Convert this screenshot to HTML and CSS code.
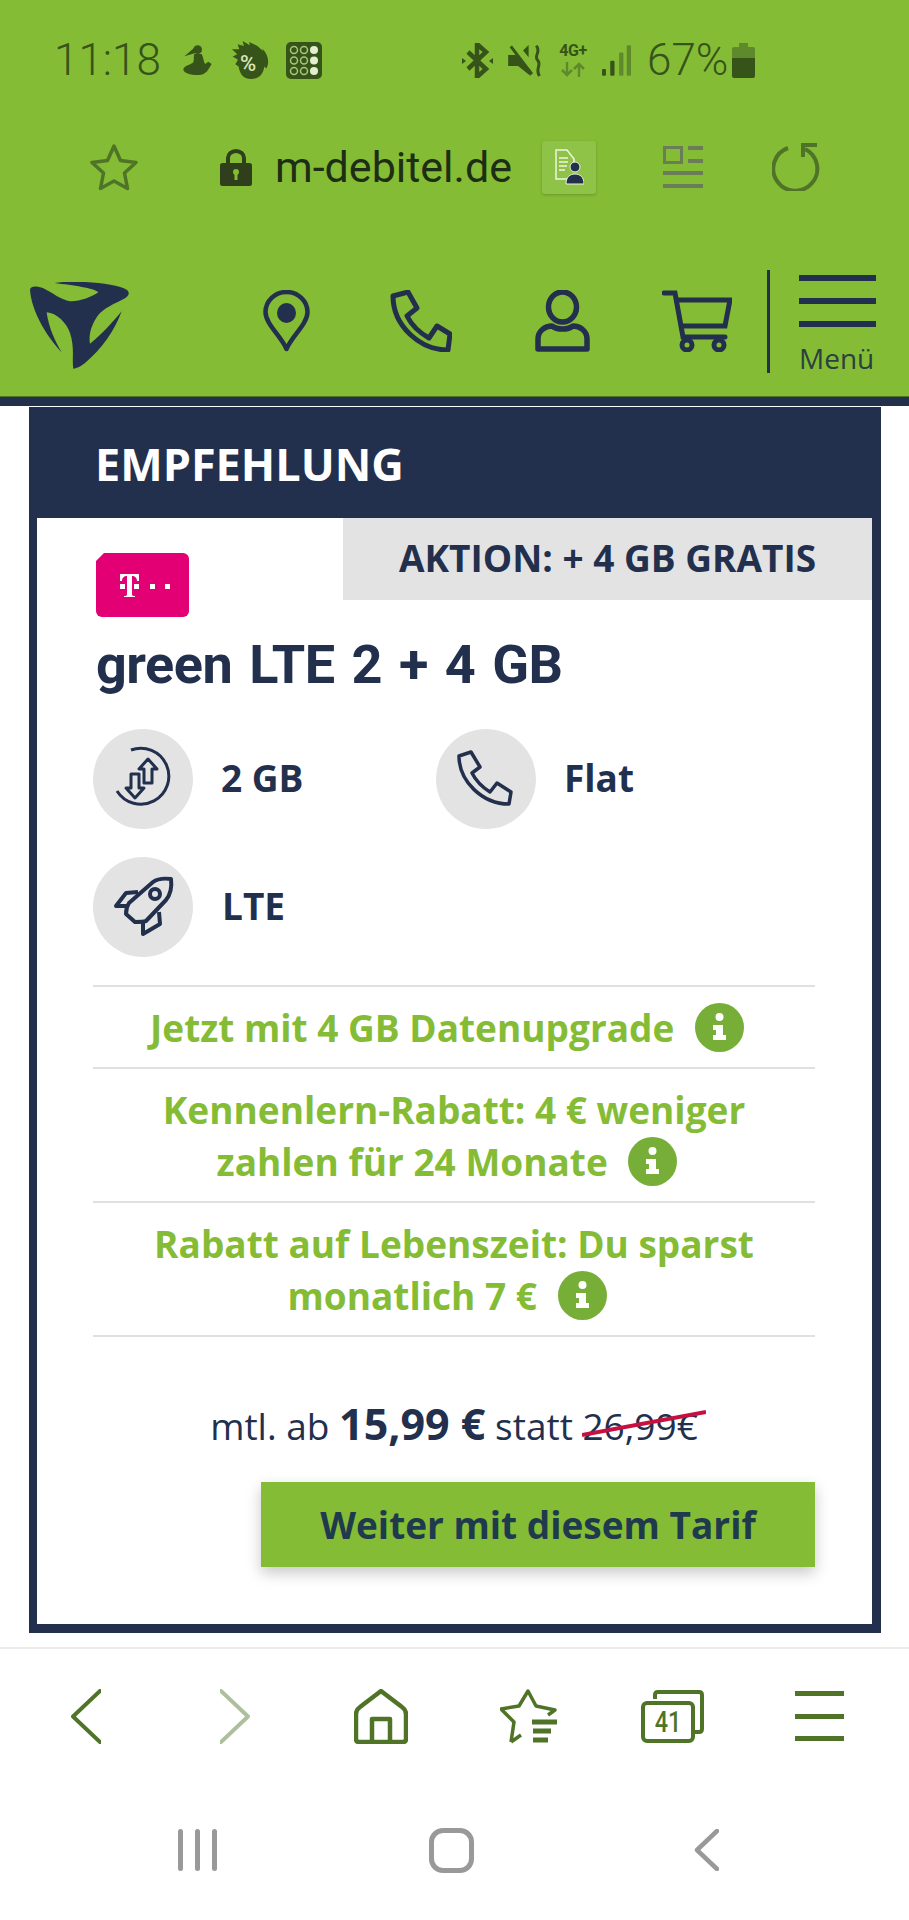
FILE: index.html
```html
<!DOCTYPE html>
<html lang="de">
<head>
<meta charset="utf-8">
<title>green LTE 2 + 4 GB</title>
<link rel="stylesheet" href="styles.css">
</head>
<body>
<div class="phone">
  <header class="top">
    <div class="status">
      <span class="time">11:18</span>
      <svg class="st-fig" width="29" height="30" viewBox="25 28 85 90"><circle cx="68" cy="42" r="13" fill="#36531a"/><path fill="#36531a" d="M58 36L28 62 62 52zM58 55H80C85 65 85 75 90 85L100 78 110 85C100 100 95 118 70 118 45 118 25 112 25 100 30 90 45 88 55 80 58 70 55 62 58 55Z"/></svg>
      <span class="st-head"><svg width="39" height="38" viewBox="168 15 112 115"><path fill="#36531a" d="M200 15L222 28 220 18 245 30 262 45 260 38C278 58 282 80 272 98L266 92C262 120 245 130 225 130 205 130 192 118 188 92L178 85 186 72 170 62 184 55 168 40 190 40 185 25 204 30Z"/></svg><span class="pct">%</span></span>
      <svg class="st-grid" width="36" height="37" viewBox="0 0 36 37"><rect width="36" height="37" rx="5" fill="#36531a"/><g fill="none" stroke="#a5c878" stroke-width="1.500"><circle cx="8" cy="8" r="3.500"/><circle cx="18" cy="8" r="3.500"/><circle cx="8" cy="18.500" r="3.500"/><circle cx="18" cy="18.500" r="3.500"/><circle cx="8" cy="29" r="3.500"/><circle cx="18" cy="29" r="3.500"/></g><g fill="#e5edd0"><circle cx="28" cy="8" r="4"/><circle cx="28" cy="18.500" r="4"/><circle cx="28" cy="29" r="4"/></g></svg>
      <svg class="st-bt" width="31" height="35" viewBox="0 0 31 35"><path fill="none" stroke="#36531a" stroke-width="4.500" d="M6 9l18 17-9 8V1l9 8L6 26"/><path fill="#36531a" d="M0 15l4 3-4 3zM31 15l-4 3 4 3z"/></svg>
      <svg class="st-mute" width="34" height="33" viewBox="160 25 102 100"><path fill="#36531a" d="M160 58H183L228 104V122L190 92H160ZM205 45L222 28V65Z"/><path fill="none" stroke="#36531a" stroke-width="9" d="M168 32L232 116M245 30C262 50 235 60 250 75 262 90 240 100 255 122"/></svg>
      <span class="st-4g"><span class="g4">4G+</span><svg width="24" height="15" viewBox="0 0 24 15"><path fill="none" stroke="#5f8a2c" stroke-width="2.500" d="M6 0v13M1 8l5 5 5-5M18 15V2M13 7l5-5 5 5"/></svg></span>
      <svg class="st-sig" width="29" height="31" viewBox="440 28 88 92"><rect x="440" y="100" width="12" height="20" rx="3" fill="#36531a"/><rect x="465" y="75" width="13" height="45" rx="3" fill="#36531a"/><rect x="492" y="50" width="13" height="70" rx="3" fill="#5f8a2c"/><rect x="515" y="28" width="13" height="92" rx="3" fill="#5f8a2c"/></svg>
      <span class="batt-text">67%</span>
      <svg class="st-batt" width="23" height="35" viewBox="0 0 23 35"><path fill="#5f8a2c" d="M7 0h9v4h5a2 2 0 0 1 2 2v9H0V6a2 2 0 0 1 2-2h5z"/><path fill="#36531a" d="M0 15h23v18a2 2 0 0 1-2 2H2a2 2 0 0 1-2-2z"/></svg>
    </div>

    <div class="urlbar">
      <svg class="u-star" width="48" height="48" viewBox="0 0 48 48"><path fill="none" stroke="#4f7427" stroke-width="3.500" stroke-linejoin="round" d="M24 3l6.500 14.500L46 19.500 34.500 30l3 15.500L24 38l-13.500 7.500 3-15.500L2 19.500l15.500-2z"/></svg>
      <svg class="u-lock" width="32" height="37" viewBox="0 0 32 37"><path fill="none" stroke="#2f3f1c" stroke-width="4" d="M8 15V9a8 7 0 0 1 16 0v6"/><rect y="14" width="32" height="23" rx="2.500" fill="#2f3f1c"/><circle cx="16" cy="23" r="3" fill="#85bc35"/><rect x="14.500" y="24" width="3" height="7" fill="#85bc35"/></svg>
      <span class="url">m-debitel.de</span>
      <span class="reader"><svg width="30" height="36" viewBox="0 0 30 36"><path fill="none" stroke="#eef5df" stroke-width="1.500" d="M13 30H2V1h11l7 9v4"/><path stroke="#eef5df" stroke-width="1.500" d="M5 9h9M5 13h9M5 17h8M5 21h6"/><circle cx="21" cy="18" r="5" fill="#22304e" stroke="#eef5df"/><path fill="#22304e" stroke="#eef5df" d="M12 35c0-7 4-10 9-10s9 3 9 10z"/></svg></span>
      <svg class="u-lay" width="40" height="42" viewBox="0 0 40 42"><path fill="#6a7d58" fill-rule="evenodd" d="M0 0h20v18H0zM3 3v12h14V3zM25 0h15v4H25zM25 13h15v4H25zM0 25h40v4H0zM0 38h40v4H0z"/></svg>
      <svg class="u-rel" width="48" height="48" viewBox="0 0 48 48"><path fill="none" stroke="#4f7427" stroke-width="4" d="M16 5A22 22 0 1 0 33 6"/><path fill="none" stroke="#4f7427" stroke-width="4" d="M31 14V2h14"/></svg>
    </div>

    <nav class="sitenav">
      <svg class="logo" width="99" height="87" viewBox="30 37 297 261"><path fill="#22304e" d="M30 60C32 48 50 48 70 56 95 68 125 92 150 95 180 96 215 82 235 68 222 55 160 47 103 40 160 30 290 40 320 60 330 68 328 78 315 86 285 102 250 115 232 140 215 165 205 195 210 222 240 200 280 155 305 125 285 180 245 240 195 280 180 292 165 298 160 297 155 270 165 235 150 190 140 160 110 130 80 128 85 170 105 215 125 248 85 205 35 130 30 60Z"/></svg>
      <svg class="n-pin" width="47" height="62" viewBox="0 0 47 62"><path fill="none" stroke="#22304e" stroke-width="4.500" stroke-linejoin="round" d="M23.500 59C18 46 2.500 34 2.500 22a21 20 0 0 1 42 0C44.500 34 29 46 23.500 59z"/><ellipse cx="23.500" cy="23" rx="9.500" ry="10" fill="#22304e"/></svg>
      <svg class="n-phone" width="62" height="62" viewBox="0 0 62 62"><path fill="none" stroke="#22304e" stroke-width="5" stroke-linejoin="round" d="M3 6l15-4 9 16-10 8c5 10 13 17 22 22l8-12 13 8-2 16C30 60 3 36 3 6z"/></svg>
      <svg class="n-user" width="55" height="62" viewBox="0 0 55 62"><ellipse cx="27.500" cy="17" rx="14" ry="15" fill="none" stroke="#22304e" stroke-width="5.500"/><path fill="none" stroke="#22304e" stroke-width="5.500" stroke-linejoin="round" d="M3 59V49c0-8 7-13 14-13 5 4 16 4 21 0 7 0 14 5 14 13v10z"/></svg>
      <svg class="n-cart" width="70" height="62" viewBox="0 0 70 62"><g fill="none" stroke="#22304e" stroke-width="5"><path stroke-linecap="round" d="M2 3h11l8 44h42"/><path d="M12 10h56l-5 26H17"/><circle cx="25" cy="55" r="5"/><circle cx="57" cy="55" r="5"/></g></svg>
      <span class="n-div"></span>
      <div class="menu">
        <span class="bar"></span><span class="bar"></span><span class="bar"></span>
        <span class="menu-label">Menü</span>
      </div>
    </nav>
  </header>
  <div class="strip"></div>

  <main class="card">
    <h2 class="card-head">EMPFEHLUNG</h2>
    <div class="card-body">
      <div class="promo">AKTION: + 4 GB GRATIS</div>
      <svg class="sim" width="93" height="64" viewBox="0 0 93 64"><path fill="#e20074" d="M8 0h79a6 6 0 0 1 6 6v52a6 6 0 0 1-6 6H6a6 6 0 0 1-6-6V8z"/><g fill="#fff"><path d="M24 21h19v7h-2c0-3-2-5-5-5v18c0 2 1 2 3 2v1H28v-1c2 0 3 0 3-2V23c-3 0-5 2-5 5h-2z"/><rect x="24" y="31" width="5" height="5"/><rect x="38" y="31" width="5" height="5"/><rect x="54" y="31" width="5" height="5"/><rect x="69" y="31" width="5" height="5"/></g></svg>
      <h1 class="title">green LTE 2 + 4 GB</h1>
      <div class="features">
        <div class="feat">
          <span class="circle"><svg width="100" height="100" viewBox="0 0 100 100"><g fill="none" stroke="#22304e" stroke-width="3" stroke-linejoin="round"><path d="M38 21A28 28 0 1 1 24 62"/><path d="M55 30l-9 10h5v14h8V40h5z"/><path d="M42 69l9-10h-5V45h-8v14h-5z"/></g></svg></span>
          <span class="feat-label">2 GB</span>
        </div>
        <div class="feat">
          <span class="circle"><svg width="100" height="100" viewBox="0 0 100 100"><path fill="none" stroke="#22304e" stroke-width="3.500" stroke-linejoin="round" d="M23 27l12-4 9 15-8 6c4 8 10 14 18 19l7-9 14 9-2 12C46 75 23 52 23 27z"/></svg></span>
          <span class="feat-label">Flat</span>
        </div>
        <div class="feat">
          <span class="circle"><svg width="100" height="100" viewBox="0 0 100 100"><g fill="none" stroke="#22304e" stroke-width="4" stroke-linejoin="round"><path d="M78 22c-8-1-14 0-18 3L36 46c-2 3-3 7-3 11l9 8c4 0 8 0 11-1l20-21c4-5 6-13 5-21z"/><circle cx="62" cy="37" r="5"/><path d="M35 49H23l10-13 12-1M66 55l1 12-17 10 0-13"/></g></svg></span>
          <span class="feat-label">LTE</span>
        </div>
      </div>
      <ul class="perks">
        <li class="perk">Jetzt mit 4 GB Datenupgrade <svg class="info" width="49" height="49" viewBox="0 0 49 49"><circle cx="24.500" cy="24.500" r="24.500" fill="#76ae38"/><circle cx="24.500" cy="14" r="4" fill="#fff"/><path fill="#fff" d="M18 22h10v10h3v5H18v-5h3v-5h-3z"/></svg></li>
        <li class="perk">Kennenlern-Rabatt: 4 € weniger<br>zahlen für 24 Monate <svg class="info" width="49" height="49" viewBox="0 0 49 49"><circle cx="24.500" cy="24.500" r="24.500" fill="#76ae38"/><circle cx="24.500" cy="14" r="4" fill="#fff"/><path fill="#fff" d="M18 22h10v10h3v5H18v-5h3v-5h-3z"/></svg></li>
        <li class="perk">Rabatt auf Lebenszeit: Du sparst<br>monatlich 7 € <svg class="info" width="49" height="49" viewBox="0 0 49 49"><circle cx="24.500" cy="24.500" r="24.500" fill="#76ae38"/><circle cx="24.500" cy="14" r="4" fill="#fff"/><path fill="#fff" d="M18 22h10v10h3v5H18v-5h3v-5h-3z"/></svg></li>
      </ul>
      <p class="price">mtl. ab <b>15,99 €</b> statt <span class="old">26,99€<svg class="strike" width="124" height="27" viewBox="0 0 124 27"><path stroke="#c8103f" stroke-width="4" d="M0 25L124 2"/></svg></span></p>
      <a class="cta">Weiter mit diesem Tarif</a>
    </div>
  </main>

  <div class="browser-bar">
    <svg width="30" height="55" viewBox="0 0 30 55"><path fill="none" stroke="#4f7427" stroke-width="4" stroke-linecap="round" stroke-linejoin="round" d="M29 2L2 27.500 29 53"/></svg>
    <svg class="nudge" width="30" height="55" viewBox="0 0 30 55"><path fill="none" stroke="#aebf9d" stroke-width="4" stroke-linecap="round" stroke-linejoin="round" d="M1 2l27 25.500L1 53"/></svg>
    <svg class="nudge-s" width="54" height="55" viewBox="0 0 54 55"><path fill="none" stroke="#4f7427" stroke-width="4.500" stroke-linejoin="round" d="M27 2L48 18c3 2 4 4 4 7v25c0 2-1 3-3 3H5c-2 0-3-1-3-3V25c0-3 1-5 4-7zM18 53V30h18v23"/></svg>
    <svg class="nudge" width="57" height="55" viewBox="0 0 57 55"><path fill="none" stroke="#4f7427" stroke-width="3.500" stroke-linejoin="round" d="M11 53l3-20L1 20l18-3 9-15 8 15 19 4-7 5M11 53l10-7"/><path stroke="#4f7427" stroke-width="5" d="M32 33h25M33 42h18M33 51h15"/></svg>
    <span class="tabs"><svg width="63" height="53" viewBox="0 0 63 53"><path fill="none" stroke="#4f7427" stroke-width="4" d="M14 9V5c0-2 1-3 3-3h41c2 0 3 1 3 3v34c0 2-1 3-3 3h-5"/><rect x="2" y="13" width="50" height="38" rx="4" fill="#fff" stroke="#4f7427" stroke-width="4"/></svg><span class="tab-count">41</span></span>
    <span class="hamb"><span></span><span></span><span></span></span>
  </div>

  <div class="sysnav">
    <span class="recents"><span></span><span></span><span></span></span>
    <span class="homekey"></span>
    <svg width="25" height="42" viewBox="0 0 25 42"><path fill="none" stroke="#999" stroke-width="4.500" stroke-linecap="round" stroke-linejoin="round" d="M23 2L3 21l20 19"/></svg>
  </div>
</div>
</body>
</html>
```

FILE: styles.css
```css
* { box-sizing: border-box; }
html, body { margin: 0; padding: 0; background: #fff; }
body { font-family: "Open Sans", sans-serif; color: #22304e; }
.phone { width: 909px; height: 1920px; overflow: hidden; display: flex; flex-direction: column; }
svg { display: block; flex: none; }

.top { background: #85bc35; color: #36531a; }
.status { height: 120px; display: flex; align-items: center; padding-left: 54px; }
.time, .batt-text { font-family: Roboto, sans-serif; font-weight: 300; font-size: 44px; line-height: 1; color: #36531a; }
.time { width: 104px; white-space: nowrap; }
.st-fig { margin-left: 25px; }
.st-head { position: relative; margin-left: 19px; width: 39px; height: 38px; }
.pct { position: absolute; left: 9px; top: 11px; font-family: Roboto, sans-serif; font-size: 22px; line-height: 24px; font-weight: 500; color: #d7e6b8; }
.st-grid { margin-left: 16px; }
.st-bt { margin-left: 140px; }
.st-mute { margin-left: 15px; }
.st-4g { margin-left: 14px; width: 34px; display: flex; flex-direction: column; align-items: center; gap: 3px; }
.g4 { font-family: Roboto, sans-serif; font-weight: 700; font-size: 16px; line-height: 16px; letter-spacing: -0.5px; color: #36531a; }
.st-sig { margin-left: 12px; }
.batt-text { margin-left: 16px; width: 78px; white-space: nowrap; }
.st-batt { margin-left: 7px; }

.urlbar { height: 94px; display: flex; align-items: center; }
.u-star { margin-left: 90px; }
.u-lock { margin-left: 82px; }
.url { margin-left: 23px; width: 235px; font-family: Roboto, sans-serif; font-size: 43px; line-height: 1; color: #1e2e14; white-space: nowrap; }
.reader { margin-left: 32px; width: 54px; height: 53px; background: #8fc348; border-radius: 3px; box-shadow: 0 1px 3px rgba(0,0,0,.2); display: flex; align-items: center; justify-content: center; }
.u-lay { margin-left: 67px; }
.u-rel { margin-left: 69px; }

.sitenav { height: 182px; padding: 32px 0 0 30px; display: flex; align-items: center; }
.logo { margin-top: 9px; }
.n-pin { margin-left: 134px; }
.n-phone { margin-left: 80px; }
.n-user { margin-left: 83px; }
.n-cart { margin-left: 72px; }
.n-div { margin-left: 35px; width: 3px; height: 103px; background: #22304e; }
.menu { margin: 8px 0 0 29px; width: 77px; display: flex; flex-direction: column; }
.bar { height: 6px; background: #22304e; margin-bottom: 17px; }
.menu-label { font-size: 28px; line-height: 34px; margin-top: -3px; color: #2b4040; white-space: nowrap; }

.strip { height: 10px; background: #22304e; border-top: 1px solid #4f7427; margin-bottom: 1px; }

.card { margin: 0 28px 0 29px; height: 1226px; border: solid #22304e; border-width: 0 9px 9px 8px; display: flex; flex-direction: column; flex: none; }
.card-head { margin: 0 -9px 0 -8px; height: 111px; background: #22304e; color: #fff; font-size: 45px; line-height: 113px; font-weight: 700; padding-left: 66px; }
.card-body { position: relative; flex: 1; padding: 35px 57px 0 56px; }
.promo { position: absolute; top: 0; right: 0; width: 529px; height: 82px; background: #e3e3e3; font-size: 37px; font-weight: 700; line-height: 80px; padding-left: 56px; white-space: nowrap; }
.sim { margin-left: 3px; }
.title { margin: 9px 0 0 3px; height: 78px; font-family: Roboto, sans-serif; font-size: 54px; line-height: 78px; font-weight: 700; word-spacing: 4px; letter-spacing: -0.5px; white-space: nowrap; }
.features { margin-top: 26px; display: grid; grid-template-columns: 343px 343px; row-gap: 30px; }
.feat { display: flex; align-items: center; gap: 28px; height: 98px; }
.feat:nth-child(3) { gap: 29px; }
.circle { width: 100px; height: 100px; border-radius: 50%; background: #e3e3e3; flex: none; }
.feat-label { font-size: 37px; font-weight: 700; margin-top: -3px; }
.perks { list-style: none; margin: 29px 0 0; padding: 0; border-bottom: 2px solid #e0e0e0; }
.perk { border-top: 2px solid #e0e0e0; padding: 15px 0 13px; text-align: center; color: #85bc35; font-size: 37px; line-height: 52px; font-weight: 700; }
.info { display: inline-block; vertical-align: -10px; margin: 0 14px 0 11px; }
.price { margin: 61px 0 0; height: 52px; text-align: center; font-size: 37px; line-height: 52px; white-space: nowrap; }
.price b { font-size: 43px; font-weight: 700; }
.old { position: relative; display: inline-block; }
.strike { position: absolute; left: 0; top: 10px; }
.cta { display: block; margin: 32px 0 0 168px; height: 85px; background: #85bc35; box-shadow: 0 6px 14px rgba(0,0,0,.22); text-align: center; font-size: 37px; line-height: 85px; font-weight: 700; color: #1f3a4d; }

.browser-bar { margin-top: 14px; height: 136px; border-top: 2px solid #e8ecec; padding: 0 17px 0 13px; display: grid; grid-template-columns: repeat(6, 146.500px); justify-items: center; align-items: center; }
.nudge { margin-left: 5px; }
.nudge-s { margin-left: 3px; }
.tabs { position: relative; width: 63px; height: 53px; }
.tab-count { position: absolute; left: 2px; top: 13px; width: 50px; text-align: center; font-family: Roboto, sans-serif; font-weight: 500; font-size: 30px; line-height: 38px; color: #4f7427; transform: scaleX(.78); }
.hamb { width: 49px; margin-left: 2px; display: flex; flex-direction: column; gap: 17.500px; }
.hamb span { height: 5px; background: #4f7427; }

.sysnav { height: 134px; padding-left: 70px; display: grid; grid-template-columns: repeat(3, 254.500px); justify-items: center; align-items: center; }
.recents { display: flex; gap: 12px; }
.recents span { width: 5px; height: 42px; border-radius: 3px; background: #999; }
.homekey { width: 45px; height: 45px; border: 5px solid #999; border-radius: 14px; }
```
